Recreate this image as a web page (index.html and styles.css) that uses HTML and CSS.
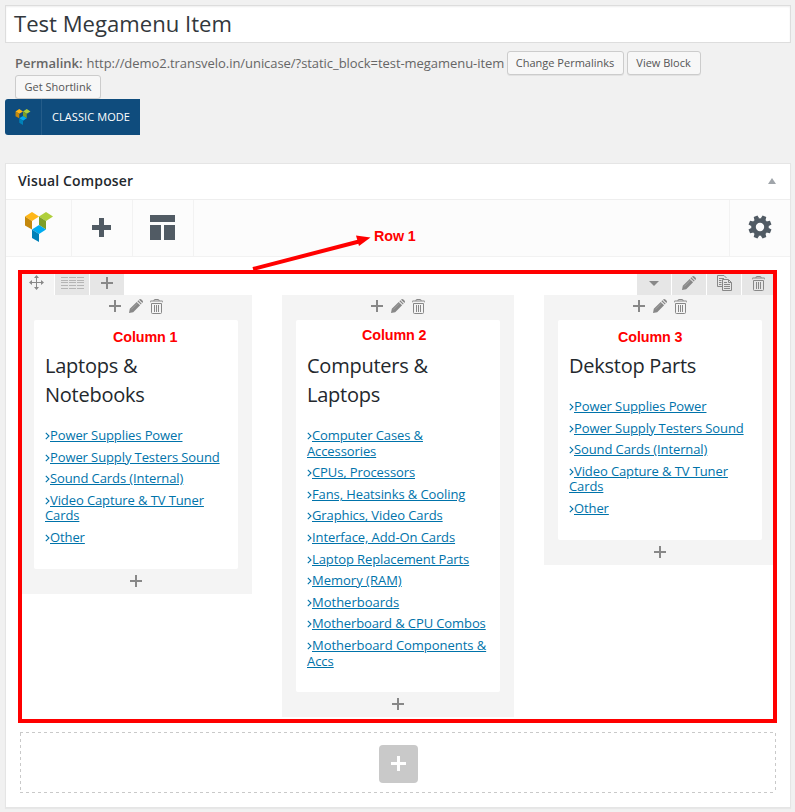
FILE: index.html
```html
<!DOCTYPE html>
<html lang="en">
<head>
<meta charset="utf-8">
<title>Test Megamenu Item</title>
<link rel="stylesheet" href="styles.css">
</head>
<body>
<svg class="defs" width="0" height="0">
  <defs>
    <symbol id="plus" viewBox="0 0 12 12"><path d="M5 0h2v5h5v2H7v5H5V7H0V5h5z"/></symbol>
    <symbol id="pencil" viewBox="0 0 14 14"><path d="M0 14l.8-4.2 6.9-6.9 3.4 3.4-6.9 6.9zM8.4 2.2l.9-.9 3.4 3.4-.9.9zM10 .7c.7-.8 1.6-.9 2.4-.1l1 1c.8.8.8 1.700 0 2.400z"/><path d="M2.200 10.500L8.500 4.200" stroke="#c8c8c8" stroke-width=".4"/></symbol>
    <symbol id="trash" viewBox="0 0 13 15"><path d="M0 3.500V3q0-1 1-1h11q1 0 1 1v.5M4 2V1.200Q4 .5 4.700.5h3.600Q9 .5 9 1.200V2M1.500 4.500h10v9q0 1-1 1h-8q-1 0-1-1zM4.500 6v7M6.500 6v7M8.500 6v7" fill="none" stroke="currentColor"/></symbol>
    <symbol id="copy" viewBox="0 0 15 16"><path d="M5 11.500H.5V.5H7L9.500 3M5.500 4.500h6L14.500 7.500v8h-9zM11.500 5v2.500h3M2 3.500h5M2 5.500h2.500M2 7.500h2.500M2 9.500h2.500M7 7.500h3M7 9.500h6M7 11.500h6M7 13.500h6" fill="none" stroke="currentColor"/></symbol>
    <symbol id="move" viewBox="0 0 15 15"><path d="M7 2h1v5h5v1H8v5H7V8H2V7h5z"/><path d="M5 3l2.500-3L10 3zM5 12l2.500 3 2.500-3zM3 5L0 7.500 3 10zM12 5l3 2.500-3 2.500z"/></symbol>
    <symbol id="angle" viewBox="0 0 5 8"><path d="M.8.8L4 4 .8 7.200" fill="none" stroke="currentColor" stroke-width="1.100"/></symbol>
    <symbol id="cubes" viewBox="0 0 28 30">
      <path fill="#ffb718" d="M0 4.500L7 0l7 4.500L7 9z"/><path fill="#c4880c" d="M0 4.500L7 9v8.500l-7-4z"/>
      <path fill="#afcf3b" d="M14 4.500L21 0l7 4.500L21 9z"/><path fill="#7d9e28" d="M14 4.500L21 9v8.500L14 13z"/>
      <path fill="#00acf0" d="M7 17.500L14 13l7 4.500-7 4.500z"/><path fill="#0081b8" d="M7 17.500l7 4.500v8l-7-4z"/>
    </symbol>
  </defs>
</svg>

<div class="title">Test Megamenu Item</div>

<div class="permalink">
  <div class="permalink-line"><strong>Permalink:</strong> <span class="url">http://demo2.transvelo.in/unicase/?static_block=test-megamenu-item</span><span class="button change">Change Permalinks</span><span class="button view">View Block</span></div>
  <span class="button shortlink">Get Shortlink</span>
</div>

<div class="classic"><span class="classic-logo"><svg width="16" height="16"><use href="#cubes"/></svg></span><span class="classic-text">CLASSIC MODE</span></div>

<section class="panel">
  <header class="panel-head"><h2>Visual Composer</h2><i class="toggle"></i></header>
  <nav class="toolbar">
    <span class="tool tool-logo"><svg width="28" height="30"><use href="#cubes"/></svg></span>
    <span class="tool"><svg width="19" height="19"><path d="M7 0h5v7h7v5h-7v7H7v-7H0V7h7z"/></svg></span>
    <span class="tool"><svg width="25" height="25"><path d="M0 0h25v7H0zM0 10h11v15H0zM14 10h11v15H14z"/></svg></span>
    <span class="tool tool-gear"><svg width="24" height="24" viewBox="-12 -12 24 24">
      <g id="gear"><circle r="6.500" fill="none" stroke="currentColor" stroke-width="4.600"/>
      <path id="teeth" d="M-2.600-8L-2-11.600H2L2.600-8zM-2.600 8L-2 11.600H2L2.600 8z" transform="rotate(22.500)"/>
      <use href="#teeth" transform="rotate(45)"/><use href="#teeth" transform="rotate(90)"/><use href="#teeth" transform="rotate(135)"/></g></svg></span>
  </nav>

  <div class="content">
    <div class="row">
      <div class="controls">
        <span class="ctl ctl-move"><svg width="15" height="15"><use href="#move"/></svg></span>
        <span class="ctl ctl-layout"><svg width="23" height="12"><path d="M0 .5h7M8 .5h7M16 .5h7M0 3.500h7M8 3.500h7M16 3.500h7M0 5.500h7M8 5.500h7M16 5.500h7M0 8.500h7M8 8.500h7M16 8.500h7M0 11.500h7M8 11.500h7M16 11.500h7" stroke="#b5b5b5"/></svg></span>
        <span class="ctl"><svg width="12" height="12"><use href="#plus"/></svg></span>
        <span class="ctl ctl-right"><svg class="caret" width="10" height="5"><path d="M0 0h10L5 5z"/></svg></span>
        <span class="ctl"><svg width="14" height="14"><use href="#pencil"/></svg></span>
        <span class="ctl ctl-copy"><svg width="15" height="16"><use href="#copy"/></svg></span>
        <span class="ctl ctl-last"><svg width="13" height="15"><use href="#trash"/></svg></span>
      </div>
      <div class="columns">
        <div class="column first">
          <div class="actions"><svg width="12" height="12"><use href="#plus"/></svg><svg width="14" height="14"><use href="#pencil"/></svg><svg width="13" height="15"><use href="#trash"/></svg></div>
          <div class="card">
            <h3>Laptops &amp; Notebooks</h3>
            <ul>
              <li><svg class="angle"><use href="#angle"/></svg><a>Power Supplies Power</a></li>
              <li><svg class="angle"><use href="#angle"/></svg><a>Power Supply Testers Sound</a></li>
              <li><svg class="angle"><use href="#angle"/></svg><a>Sound Cards (Internal)</a></li>
              <li><svg class="angle"><use href="#angle"/></svg><a>Video Capture &amp; TV Tuner Cards</a></li>
              <li><svg class="angle"><use href="#angle"/></svg><a>Other</a></li>
            </ul>
            <b class="note note-1">Column 1</b>
          </div>
          <div class="append"><svg width="12" height="12"><use href="#plus"/></svg></div>
        </div>
        <div class="column">
          <div class="actions"><svg width="12" height="12"><use href="#plus"/></svg><svg width="14" height="14"><use href="#pencil"/></svg><svg width="13" height="15"><use href="#trash"/></svg></div>
          <div class="card">
            <h3>Computers &amp; Laptops</h3>
            <ul>
              <li><svg class="angle"><use href="#angle"/></svg><a>Computer Cases &amp; Accessories</a></li>
              <li><svg class="angle"><use href="#angle"/></svg><a>CPUs, Processors</a></li>
              <li><svg class="angle"><use href="#angle"/></svg><a>Fans, Heatsinks &amp; Cooling</a></li>
              <li><svg class="angle"><use href="#angle"/></svg><a>Graphics, Video Cards</a></li>
              <li><svg class="angle"><use href="#angle"/></svg><a>Interface, Add-On Cards</a></li>
              <li><svg class="angle"><use href="#angle"/></svg><a>Laptop Replacement Parts</a></li>
              <li><svg class="angle"><use href="#angle"/></svg><a class="wide">Memory (RAM)</a></li>
              <li><svg class="angle"><use href="#angle"/></svg><a class="wide">Motherboards</a></li>
              <li><svg class="angle"><use href="#angle"/></svg><a>Motherboard &amp; CPU Combos</a></li>
              <li><svg class="angle"><use href="#angle"/></svg><a class="mid">Motherboard Components &amp; Accs</a></li>
            </ul>
            <b class="note note-2">Column 2</b>
          </div>
          <div class="append"><svg width="12" height="12"><use href="#plus"/></svg></div>
        </div>
        <div class="column last">
          <div class="actions"><svg width="12" height="12"><use href="#plus"/></svg><svg width="14" height="14"><use href="#pencil"/></svg><svg width="13" height="15"><use href="#trash"/></svg></div>
          <div class="card">
            <h3>Dekstop Parts</h3>
            <ul>
              <li><svg class="angle"><use href="#angle"/></svg><a>Power Supplies Power</a></li>
              <li><svg class="angle"><use href="#angle"/></svg><a>Power Supply Testers Sound</a></li>
              <li><svg class="angle"><use href="#angle"/></svg><a>Sound Cards (Internal)</a></li>
              <li><svg class="angle"><use href="#angle"/></svg><a>Video Capture &amp; TV Tuner Cards</a></li>
              <li><svg class="angle"><use href="#angle"/></svg><a>Other</a></li>
            </ul>
            <b class="note note-3">Column 3</b>
          </div>
          <div class="append"><svg width="12" height="12"><use href="#plus"/></svg></div>
        </div>
      </div>
      <svg class="arrow" width="120" height="40"><path d="M1 36L107 8.500" stroke="#f00" stroke-width="4"/><path fill="#f00" d="M118.500 4.500L104 2.500l3 10.500z"/></svg>
      <b class="note note-row">Row 1</b>
    </div>
    <div class="add-row">
      <svg class="dashes" width="756" height="61"><path d="M0 .5H756M0 60.500H756M.5 1V61M755.500 1V61" fill="none" stroke="#c9c9c9" stroke-dasharray="3 3"/></svg>
      <span class="add"><svg width="15" height="15"><path d="M6 0h3v6h6v3H9v6H6V9H0V6h6z"/></svg></span>
    </div>
  </div>
</section>
</body>
</html>
```
FILE: styles.css
```css
* { box-sizing: border-box; }
body {
  margin: 0;
  padding: 5px 4px 0 5px;
  height: 812px;
  overflow: hidden;
  background: #f1f1f1;
  color: #666;
  font: 13px/18px "Open Sans", sans-serif;
}
svg { display: block; fill: currentColor; flex: none; }
.defs { position: absolute; }

.title {
  height: 38px;
  padding: 0 8px;
  border: 1px solid #ddd;
  background: #fff;
  box-shadow: inset 0 1px 2px rgba(0, 0, 0, .07);
  color: #32373c;
  font-size: 22.1px;
  line-height: 34px;
}

.permalink { padding: 8px 10px 0; height: 56px; }
.permalink-line { display: flex; align-items: center; height: 24px; white-space: nowrap; }
.permalink-line strong { font-weight: 600; }
.url { flex: none; margin-left: 4px; width: 417px; letter-spacing: -.05px; }
.button {
  display: block;
  height: 24px;
  border: 1px solid #ccc;
  border-radius: 3px;
  background: #f7f7f7;
  box-shadow: 0 1px 0 rgba(0, 0, 0, .06);
  color: #555;
  font-size: 11px;
  line-height: 22px;
  text-align: center;
  white-space: nowrap;
  flex: none;
}
.change { width: 117px; margin-left: 3px; }
.view { width: 74px; margin-left: 3px; }
.shortlink { width: 86px; }

.classic {
  display: flex;
  width: 135px;
  height: 36px;
  border-radius: 3px 0 0 3px;
  background: #0f4c7d;
  color: #fff;
  font-size: 11px;
  line-height: 36px;
}
.classic-logo { width: 37px; padding: 10px 0 0 10px; border-right: 1px solid #245c89; }
.classic-text { padding-left: 10px; white-space: nowrap; letter-spacing: .08px; }

.panel {
  margin-top: 28px;
  height: 645px;
  border: 1px solid #e5e5e5;
  background: #fff;
  box-shadow: 0 1px 1px rgba(0, 0, 0, .04);
}
.panel-head {
  display: flex;
  justify-content: space-between;
  align-items: center;
  height: 36px;
  padding: 0 14px 2px 12px;
  border-bottom: 1px solid #eee;
}
h2 { margin: 0; color: #23282d; font-size: 14px; line-height: 20px; font-weight: 600; letter-spacing: .15px; }
.toggle { border: 4px solid transparent; border-top: 0; border-bottom: 6px solid #a0a5aa; }
.toolbar {
  display: flex;
  height: 57px;
  background: #fcfcfc;
  border-bottom: 1px solid #f2f2f2;
  color: #515b64;
}
.tool {
  display: flex;
  align-items: center;
  justify-content: center;
  width: 61px;
  padding: 0 2px 1px 0;
  border-right: 1px solid #f2f2f2;
}
.tool-logo { width: 66px; padding: 0 0 2px; }
.tool-gear { margin-left: auto; padding: 0 1px 2px 0; border-right: 0; border-left: 1px solid #f2f2f2; }

.content { padding: 13px 13px 0 12px; }
.row { position: relative; height: 453px; border: 4px solid #f00; color: #888; }
.controls { display: flex; height: 21px; gap: 1px; }
.ctl {
  display: flex;
  justify-content: center;
  align-items: center;
  width: 34px;
  background: #e6e6e6;
  padding-bottom: 3px;
}
.ctl-move { width: 32px; background: #f4f4f4; padding-right: 3px; padding-bottom: 4px; }
.ctl-layout { padding-left: 1px; }
.ctl-copy { padding-left: 1px; }
.ctl-right { margin-left: auto; padding-right: 1px; }
.ctl-last { width: 31px; padding-left: 2px; }
.columns { display: flex; gap: 30px; align-items: flex-start; }
.column { width: 232px; padding: 0 14px; background: #f4f4f4; }
.column.first { width: 230px; padding-left: 12px; }
.column.last { width: 229px; padding-right: 11px; }
.actions { display: flex; align-items: center; justify-content: center; gap: 8px; height: 25px; padding-bottom: 3px; }
.actions svg:last-child { margin-left: -1px; }
.card {
  position: relative;
  padding: 31px 11px 17px;
  border-radius: 2px;
  background: #fff;
}
h3 { margin: 0 0 19px; color: #23282d; font-size: 20px; line-height: 29px; font-weight: 400; letter-spacing: -.25px; }
ul { margin: 0; padding: 0; list-style: none; color: #0073aa; }
li { margin-bottom: 6px; line-height: 15.6px; }
a { text-decoration: underline; letter-spacing: -.1px; }
a.mid { letter-spacing: -.04px; }
a.wide { letter-spacing: 0; }
.angle { display: inline-block; width: 5px; height: 8px; vertical-align: 0; }
.append { display: flex; align-items: center; justify-content: center; height: 25px; padding-bottom: 1px; }

.note {
  position: absolute;
  color: #f00;
  font: bold 15px/18px "Liberation Sans", sans-serif;
  letter-spacing: -.1px;
  white-space: nowrap;
  transform: scaleX(.955);
  transform-origin: 0 50%;
}
.note-1 { left: 79px; top: 8px; }
.note-2 { left: 66px; top: 6px; }
.note-3 { left: 60px; top: 8px; }
.note-row { left: 352px; top: -47px; }
.arrow { position: absolute; left: 230px; top: -41px; }

.add-row {
  position: relative;
  display: flex;
  align-items: center;
  justify-content: center;
  height: 62px;
  width: 756px;
  margin: 9px 0 0 2px;
}
.dashes { position: absolute; left: 0; top: 0; }
.add {
  display: flex;
  align-items: center;
  justify-content: center;
  width: 39px;
  height: 38px;
  margin-top: 2px;
  padding-bottom: 1px;
  border-radius: 4px;
  background: #c9c9c9;
  color: #fff;
}
```
